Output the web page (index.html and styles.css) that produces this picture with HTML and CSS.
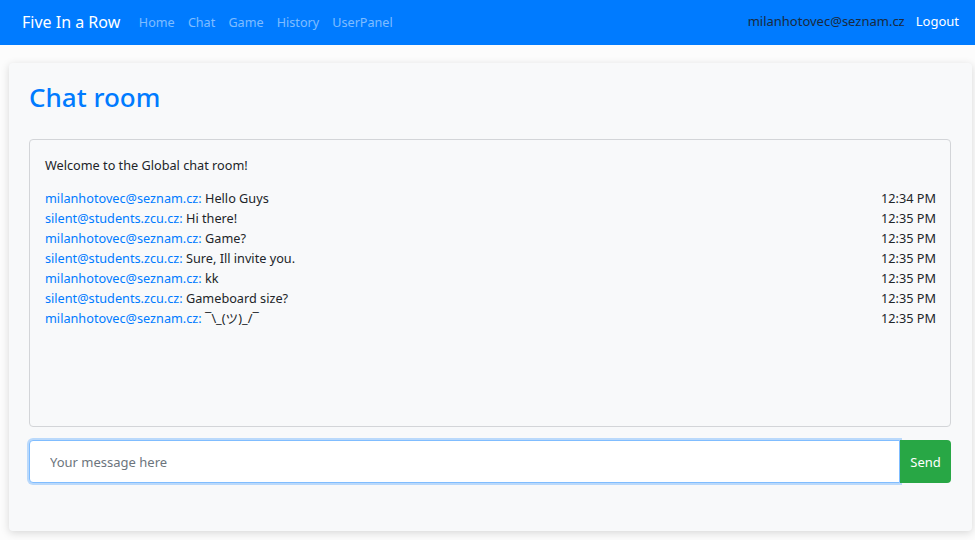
FILE: index.html
```html
<!DOCTYPE html>
<html lang="en">
<head>
  <title>Chat</title>
  <link rel="stylesheet" href="styles.css">
</head>
<body>

  <nav class="navbar">
    <a class="brand" href="#">Five In a Row</a>
    <ul class="nav-links">
      <li><a href="#">Home</a></li>
      <li><a href="#">Chat</a></li>
      <li><a href="#">Game</a></li>
      <li><a href="#">History</a></li>
      <li><a href="#">UserPanel</a></li>
    </ul>
    <span class="user">milanhotovec@seznam.cz</span>
    <a class="logout" href="#">Logout</a>
  </nav>

  <main class="card">
    <h1>Chat room</h1>

    <div class="chat-box">
      <p class="welcome">Welcome to the Global chat room!</p>
      <div class="messages">
        <div class="msg"><span><span class="author">milanhotovec@seznam.cz:</span> Hello Guys</span><span>12:34 PM</span></div>
        <div class="msg"><span><span class="author">silent@students.zcu.cz:</span> Hi there!</span><span>12:35 PM</span></div>
        <div class="msg"><span><span class="author">milanhotovec@seznam.cz:</span> Game?</span><span>12:35 PM</span></div>
        <div class="msg"><span><span class="author">silent@students.zcu.cz:</span> Sure, Ill invite you.</span><span>12:35 PM</span></div>
        <div class="msg"><span><span class="author">milanhotovec@seznam.cz:</span> kk</span><span>12:35 PM</span></div>
        <div class="msg"><span><span class="author">silent@students.zcu.cz:</span> Gameboard size?</span><span>12:35 PM</span></div>
        <div class="msg"><span><span class="author">milanhotovec@seznam.cz:</span> ¯\_(ツ)_/¯</span><span>12:35 PM</span></div>
      </div>
    </div>

    <form class="send-form">
      <input type="text" placeholder="Your message here">
      <button type="button">Send</button>
    </form>
  </main>

</body>
</html>
```

FILE: styles.css
```css
body {
  margin: 0;
  background-color: #fcfcfc;
  font-family: "Noto Sans", "Noto Sans CJK JP", sans-serif;
  font-size: 12.7px;
  color: #212529;
}

a {
  text-decoration: none;
}

.navbar {
  display: flex;
  align-items: center;
  height: 45px;
  padding: 0 16px 0 22px;
  background-color: #007bff;
}

.brand {
  color: #fff;
  font-size: 16px;
  margin-right: 12px;
  margin-top: -2px;
}

.nav-links {
  display: flex;
  list-style: none;
  margin: 0;
  padding: 0;
  flex: 1;
}

.nav-links a {
  display: block;
  padding: 0 6.6px;
  color: rgba(255, 255, 255, 0.5);
  font-size: 12.6px;
}

.user {
  color: #1a2a40;
  font-size: 13px;
  margin-right: 11px;
  margin-top: -4px;
}

.logout {
  color: #fff;
  font-size: 13px;
  margin-top: -4px;
}

.card {
  margin: 18px 3px 10px 9px;
  padding: 16px 21px 48px 20px;
  background-color: #f8f9fa;
  border-radius: 4px;
  box-shadow: 0 2px 8px rgba(0, 0, 0, 0.15);
}

h1 {
  margin: 0 0 24px;
  color: #007bff;
  font-size: 26px;
  font-weight: 500;
  line-height: 36px;
}

.chat-box {
  height: 256px;
  padding: 14px 14px 16px 15px;
  border: 1px solid #d3d5d8;
  border-radius: 4px;
}

.welcome {
  margin: 0 0 12px;
  line-height: 22px;
}

.msg {
  display: flex;
  justify-content: space-between;
  line-height: 20px;
}

.author {
  color: #007bff;
}

.send-form {
  display: flex;
  margin-top: 13px;
}

.send-form input {
  flex: 1;
  height: 43px;
  box-sizing: border-box;
  padding: 0 20px;
  border: 1px solid #80bdff;
  border-radius: 4px 0 0 4px;
  box-shadow: 0 0 0 2px rgba(0, 123, 255, 0.25);
  font-family: inherit;
  font-size: 13px;
  color: #495057;
  outline: none;
}

.send-form input::placeholder {
  color: #6c757d;
}

.send-form button {
  width: 51px;
  height: 43px;
  border: none;
  border-radius: 0 4px 4px 0;
  background-color: #28a745;
  color: #fff;
  font-family: inherit;
  font-size: 13px;
}
```
